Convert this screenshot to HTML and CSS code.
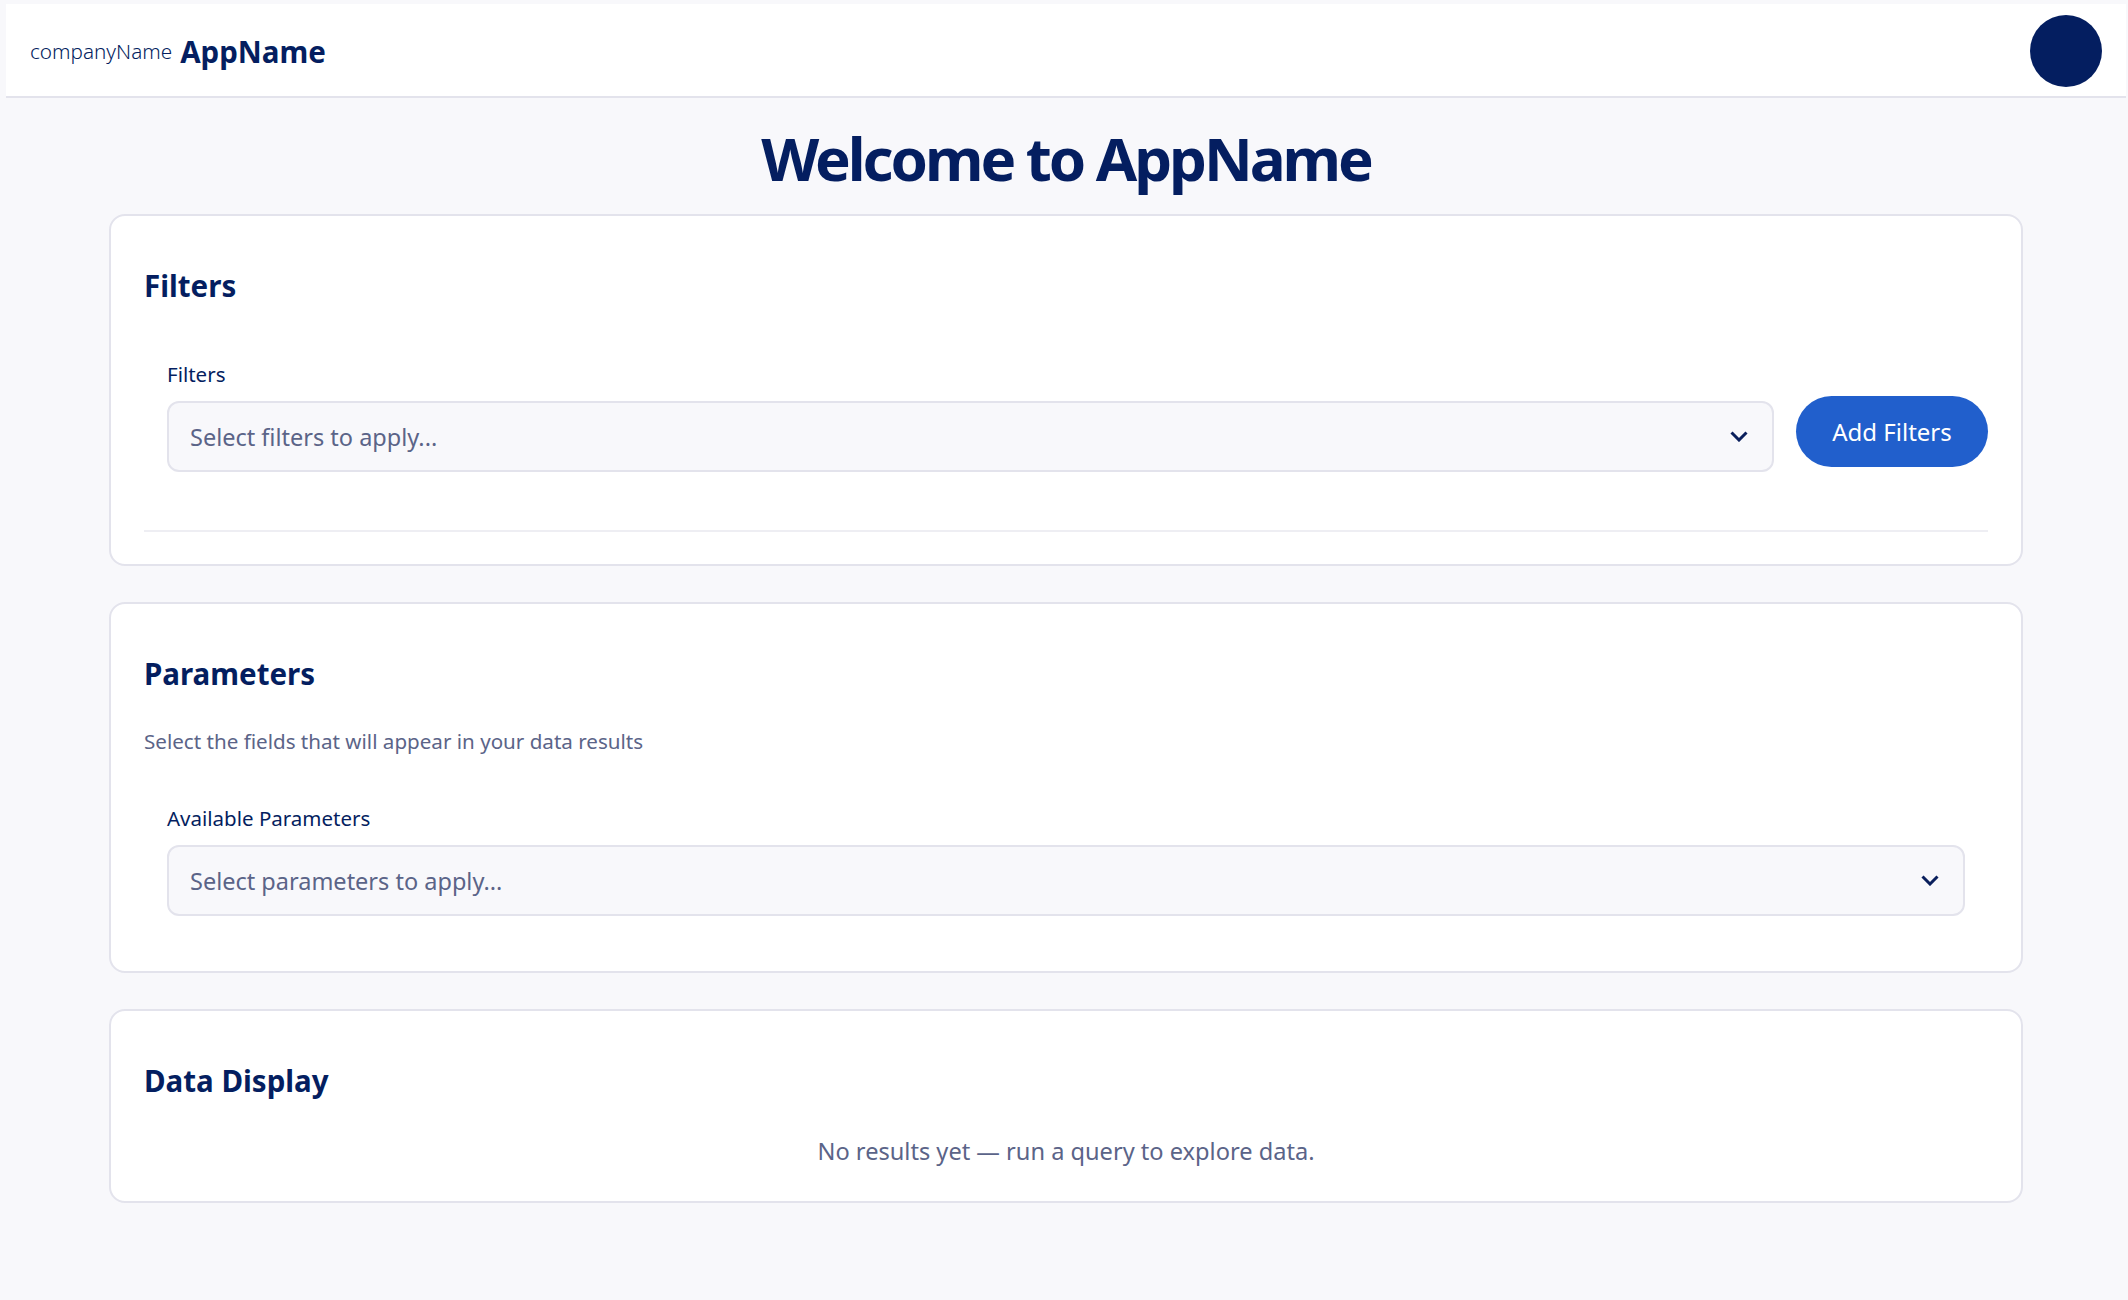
FILE: index.html
```html
<!DOCTYPE html>
<html lang="en">
<head>
<meta charset="utf-8">
<title>AppName</title>
<link rel="stylesheet" href="styles.css">
</head>
<body>
<div class="app">
  <header class="topbar">
    <div class="brand">
      <span class="company">companyName</span>
      <span class="appname">AppName</span>
    </div>
    <div class="avatar"></div>
  </header>
  <main class="content">
    <h1 class="page-title">Welcome to AppName</h1>
    <section class="card card-filters">
      <h2 class="card-title">Filters</h2>
      <div class="filter-row">
        <div class="field">
          <label class="field-label">Filters</label>
          <div class="select">
            <span>Select filters to apply...</span>
            <svg class="chevron" viewBox="0 0 18 11" width="18" height="11"><path d="M1.5 1.5 9 9l7.5-7.5" fill="none" stroke="#0a1f5c" stroke-width="3"/></svg>
          </div>
        </div>
        <button class="btn">Add Filters</button>
      </div>
      <div class="divider"></div>
    </section>
    <section class="card card-params">
      <h2 class="card-title">Parameters</h2>
      <p class="card-sub">Select the fields that will appear in your data results</p>
      <div class="field field-params">
        <label class="field-label">Available Parameters</label>
        <div class="select">
          <span>Select parameters to apply...</span>
          <svg class="chevron" viewBox="0 0 18 11" width="18" height="11"><path d="M1.5 1.5 9 9l7.5-7.5" fill="none" stroke="#0a1f5c" stroke-width="3"/></svg>
        </div>
      </div>
    </section>
    <section class="card card-data">
      <h2 class="card-title">Data Display</h2>
      <p class="empty">No results yet — run a query to explore data.</p>
    </section>
  </main>
</div>
</body>
</html>
```
FILE: styles.css
```css
* { box-sizing: border-box; }
html, body { margin: 0; height: 100%; }
body {
  background: #f8f8fb;
  font-family: "Noto Sans", "Open Sans", sans-serif;
  color: #041e60;
  padding: 4px 2px 0 6px;
}
.topbar {
  height: 94px;
  background: #fff;
  border-bottom: 2px solid #e3e3ec;
  display: flex;
  align-items: center;
  justify-content: space-between;
  padding: 1px 24px 0;
}
.brand { display: flex; align-items: center; gap: 8px; }
.company { font-size: 20.7px; font-weight: 300; }
.appname { font-size: 29.5px; font-weight: 700; margin-top: 2px; }
.avatar { width: 72px; height: 72px; border-radius: 50%; background: #041e60; }
.content { padding: 0 103px; }
.page-title {
  margin: 0;
  height: 116px;
  font-size: 60px;
  line-height: 120px;
  font-weight: 700;
  letter-spacing: -3.05px;
  text-align: center;
}
.card {
  background: #fff;
  border: 2px solid #e3e3ec;
  border-radius: 16px;
  padding: 0 33px;
  margin-bottom: 36px;
}
.card-filters { height: 352px; }
.card-params { height: 370.5px; }
.card-data { height: 194px; }
.card-title {
  margin: 0;
  padding-top: 49px;
  font-size: 29.5px;
  line-height: 42px;
  font-weight: 700;
}
.filter-row { display: flex; gap: 22px; margin-top: 52px; padding-left: 23px; align-items: flex-start; }
.field { flex: 1; }
.field-params { margin: 47px 23px 0; }
.field-label { display: block; font-size: 20.5px; line-height: 30px; margin-bottom: 12px; }
.select {
  height: 71px;
  background: #f8f8fb;
  border: 2px solid #e3e3ec;
  border-radius: 12px;
  padding: 0 24px 0 21px;
  display: flex;
  align-items: center;
  justify-content: space-between;
  font-size: 23.5px;
  color: #5b6488;
}
.btn {
  margin-top: 37px;
  width: 192px;
  height: 71px;
  border: 0;
  border-radius: 36px;
  background: #215fcc;
  color: #fff;
  font-family: inherit;
  font-size: 24px;
}
.divider { height: 2px; background: #eeeef3; margin-top: 57.5px; }
.card-sub { margin: 31px 0 0; font-size: 20.6px; line-height: 30px; color: #5b6488; }
.empty { margin: 32px 0 0; text-align: center; font-size: 23.6px; line-height: 34px; color: #5b6488; }
```
